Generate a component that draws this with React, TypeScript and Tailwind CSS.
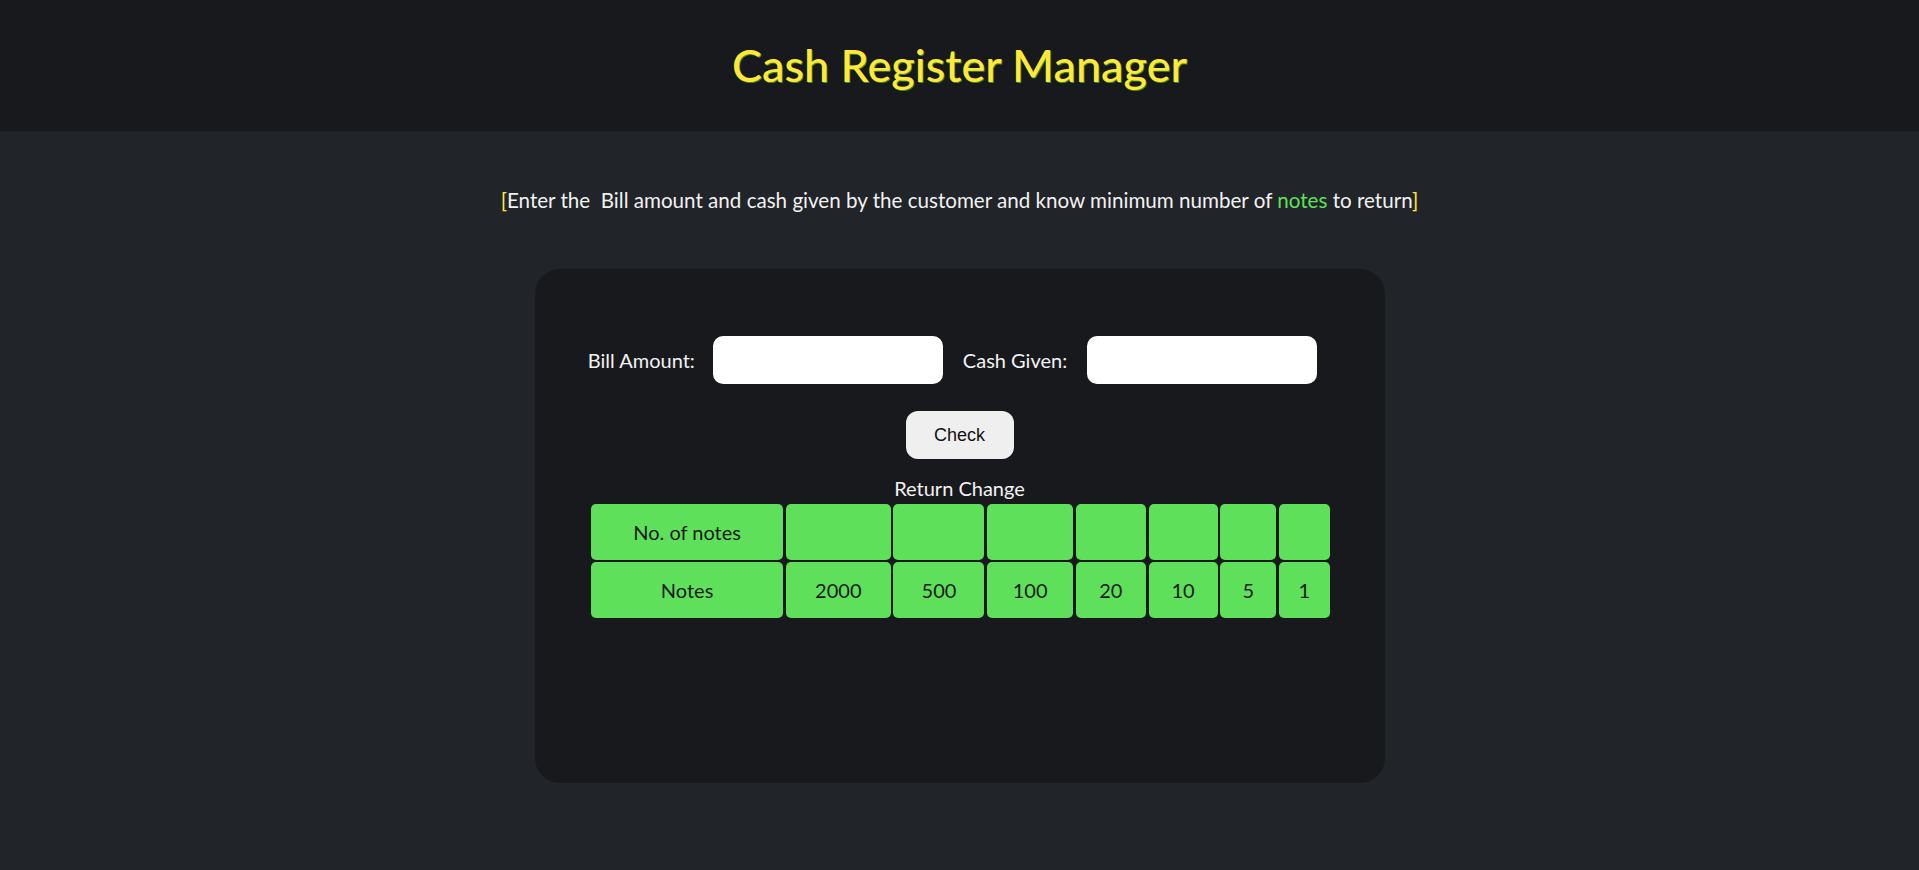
const denominations = [2000, 500, 100, 20, 10, 5, 1];

const cell =
  "flex items-center justify-center rounded-[5px] bg-[#5fe05a] text-[20px] text-[#1b1b1b] h-[56px]";

export default function App() {
  return (
    <div className="min-h-screen bg-[#212429] font-['Lato','Noto_Sans',sans-serif] text-[#f2f2f2]">
      <header className="flex h-[131px] items-center justify-center bg-[#18191c]">
        <h1 className="text-[45px] font-medium text-[#ffe83a] [text-shadow:1px_1px_0_#3d8a1f]">
          Cash Register Manager
        </h1>
      </header>

      <p className="mt-[57px] text-center text-[20.6px] leading-[24px]">
        <span className="text-[#ffe83a]">[</span>
        Enter the&nbsp; Bill amount and cash given by the customer and know minimum number of{" "}
        <span className="text-[#5fe05a]">notes</span> to return
        <span className="text-[#ffe83a]">]</span>
      </p>

      <div className="mx-auto mt-[57px] flex h-[514px] w-[850px] flex-col items-center rounded-[25px] bg-[#18191c] pt-[67px]">
        <div className="flex items-center pr-[14px]">
          <label className="text-[20px]">Bill Amount:</label>
          <input className="ml-[18px] h-[48px] w-[230px] rounded-[10px] bg-white px-3 text-black outline-none" />
          <label className="ml-[20px] text-[20px]">Cash Given:</label>
          <input className="ml-[20px] h-[48px] w-[230px] rounded-[10px] bg-white px-3 text-black outline-none" />
        </div>

        <button className="mt-[27px] h-[48px] w-[108px] rounded-[12px] bg-[#efefef] font-['Liberation_Sans',Arial,sans-serif] text-[18px] text-[#111]">
          Check
        </button>

        <div className="mt-[17px] text-[20px] leading-[24px]">Return Change</div>

        <div className="mt-[4px] grid grid-cols-[192px_105px_91px_86px_70px_69px_56px_51px] gap-x-[2.7px] gap-y-[2px] pl-[2px]">
          <div className={cell}>No. of notes</div>
          {denominations.map((d) => (
            <div key={"n" + d} className={cell}></div>
          ))}
          <div className={cell}>Notes</div>
          {denominations.map((d) => (
            <div key={d} className={cell}>
              {d}
            </div>
          ))}
        </div>
      </div>
    </div>
  );
}
